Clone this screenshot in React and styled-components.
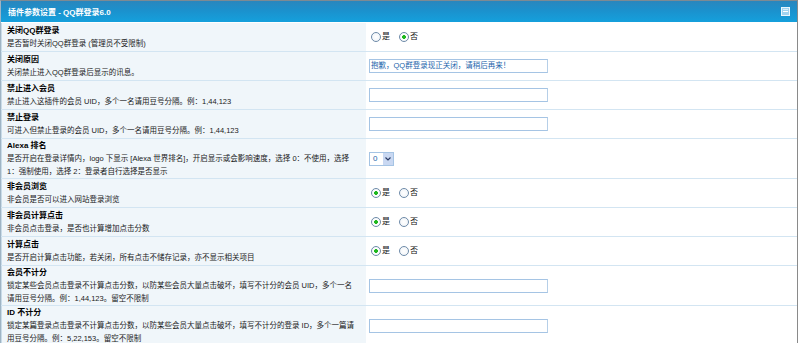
import React from "react";
import styled, { createGlobalStyle } from "styled-components";

const FONT = `"Liberation Sans", "Noto Sans CJK SC", sans-serif`;

const Global = createGlobalStyle`
  html, body { margin: 0; padding: 0; background: #ffffff; }
  body {
    font-family: ${FONT};
    font-size: 7.5px;
    color: #111;
  }
`;

const Panel = styled.div`
  width: 798px;
  box-sizing: border-box;
  border-top: 1px solid #7d8a93;
  border-right: 1px solid #8a8a8a;
  border-left: 1px solid #9fb4c4;
  background: #fff;
`;

const Header = styled.div`
  height: 22px;
  box-sizing: border-box;
  display: flex;
  align-items: center;
  justify-content: space-between;
  padding: 0 7px 0 7px;
  background: linear-gradient(#2a86bd 0%, #1b91cd 45%, #15a0dc 100%);
  border-bottom: 1px solid #ffffff;
  color: #fff;
  font-weight: bold;
  font-size: 8px;
`;

const Row = styled.div`
  display: grid;
  grid-template-columns: 365px 1fr;
  min-height: 29px;
  box-sizing: border-box;
  border-bottom: 1px solid #d3e5f2;
`;

const Label = styled.div`
  background: #f0f6fa;
  padding: 0 2px 0 5px;
  display: flex;
  flex-direction: column;
  justify-content: center;
  line-height: 13px;
  border-left: 1px solid #c8dbe8;
  white-space: nowrap;
  overflow: hidden;
`;

const Title = styled.div`
  font-weight: bold;
  font-size: 8px;
  color: #000;
`;

const Desc = styled.div`
  color: #1a1a1a;
`;

const Control = styled.div`
  display: flex;
  align-items: center;
  padding-left: 3px;
`;

const RadioGroup = styled.div`
  display: flex;
  align-items: center;
  gap: 7px;
`;

const RadioItem = styled.label`
  display: flex;
  align-items: center;
  gap: 1px;
  color: #111;
  font-size: 8px;
  line-height: 10px;
`;

const Dot = styled.span`
  width: 8px;
  height: 8px;
  border-radius: 50%;
  border: 1px solid #6d8aa8;
  background: radial-gradient(circle at 50% 50%, ${(p) => (p.$on ? "#1fb81f 0, #1fb81f 1.6px, #ffffff 2.2px" : "#ffffff 0")}, #eef2f6 100%);
  box-sizing: content-box;
  margin-left: 2px;
`;

const TextBox = styled.div`
  width: 179px;
  height: 14px;
  box-sizing: border-box;
  border: 1px solid #a5c4e4;
  border-right-color: #b6cfe8;
  background: #fff;
  color: #1b64ab;
  font-size: 7.5px;
  line-height: 12px;
  padding-left: 1px;
  white-space: nowrap;
  overflow: hidden;
`;

const SelectBox = styled.div`
  width: 25px;
  height: 14px;
  box-sizing: border-box;
  border: 1px solid #a5c4e4;
  display: flex;
  align-items: stretch;
  background: #fff;
`;

const SelectValue = styled.span`
  flex: 1;
  color: #1b64ab;
  padding-left: 3px;
  line-height: 12px;
  font-size: 8px;
`;

const SelectArrow = styled.span`
  width: 10px;
  background: #c9d8f2;
  display: flex;
  align-items: center;
  justify-content: center;
`;

const CollapseIcon = () => (
  <svg width="9" height="9" viewBox="0 0 9 9">
    <rect x="0.5" y="0.5" width="8" height="8" fill="#9fd3f0" stroke="#e9f6fd" />
    <rect x="2" y="4" width="5" height="1" fill="#ffffff" />
    <rect x="2" y="2" width="5" height="1" fill="#d8effb" />
  </svg>
);

const Radio = ({ yes }) => (
  <RadioGroup>
    <RadioItem>
      <Dot $on={yes} />是
    </RadioItem>
    <RadioItem>
      <Dot $on={!yes} />否
    </RadioItem>
  </RadioGroup>
);

const rows = [
  { t: "关闭QQ群登录", d: ["是否暂时关闭QQ群登录 (管理员不受限制)"], c: <Radio yes={false} /> },
  { t: "关闭原因", d: ["关闭禁止进入QQ群登录后显示的讯息。"], c: <TextBox>抱歉，QQ群登录现正关闭，请稍后再来！</TextBox> },
  { t: "禁止进入会员", d: ["禁止进入这插件的会员 UID，多个一名请用豆号分隔。例：1,44,123"], c: <TextBox /> },
  { t: "禁止登录", d: ["可进入但禁止登录的会员 UID，多个一名请用豆号分隔。例：1,44,123"], c: <TextBox /> },
  {
    t: "Alexa 排名",
    d: [
      "是否开启在登录详情内，logo 下显示 [Alexa 世界排名]，开启显示或会影响速度，选择 0：不使用，选择",
      "1：强制使用，选择 2：登录者自行选择是否显示",
    ],
    c: (
      <SelectBox>
        <SelectValue>0</SelectValue>
        <SelectArrow>
          <svg width="6" height="4" viewBox="0 0 6 4">
            <path d="M0.5 0.5 L3 3 L5.5 0.5" fill="none" stroke="#2b3c66" strokeWidth="1.2" />
          </svg>
        </SelectArrow>
      </SelectBox>
    ),
  },
  { t: "非会员浏览", d: ["非会员是否可以进入网站登录浏览"], c: <Radio yes /> },
  { t: "非会员计算点击", d: ["非会员点击登录，是否也计算增加点击分数"], c: <Radio yes /> },
  { t: "计算点击", d: ["是否开启计算点击功能，若关闭，所有点击不储存记录，亦不显示相关项目"], c: <Radio yes /> },
  {
    t: "会员不计分",
    d: [
      "锁定某些会员点击登录不计算点击分数，以防某些会员大量点击破坏，填写不计分的会员 UID，多个一名",
      "请用豆号分隔。例：1,44,123。留空不限制",
    ],
    c: <TextBox />,
  },
  {
    t: "ID 不计分",
    d: [
      "锁定某篇登录点击登录不计算点击分数，以防某些会员大量点击破坏，填写不计分的登录 ID，多个一篇请",
      "用豆号分隔。例：5,22,153。留空不限制",
    ],
    c: <TextBox />,
  },
];

export default function App() {
  return (
    <>
      <Global />
      <Panel>
        <Header>
          <span>插件参数设置 - QQ群登录6.0</span>
          <CollapseIcon />
        </Header>
        {rows.map((r, i) => (
          <Row key={i}>
            <Label>
              <Title>{r.t}</Title>
              {r.d.map((line, j) => (
                <Desc key={j}>{line}</Desc>
              ))}
            </Label>
            <Control>{r.c}</Control>
          </Row>
        ))}
      </Panel>
    </>
  );
}
